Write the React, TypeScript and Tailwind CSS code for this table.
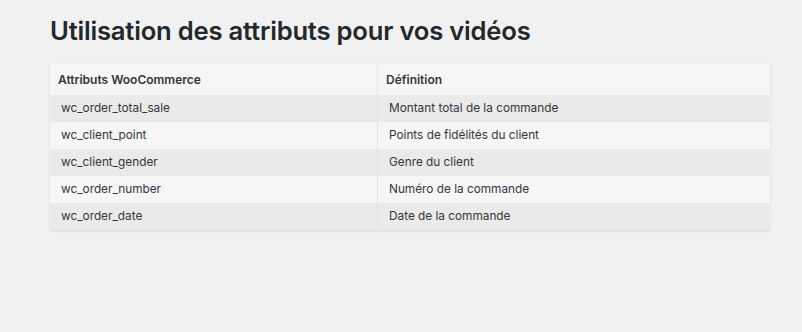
const rows = [
  ["wc_order_total_sale", "Montant total de la commande"],
  ["wc_client_point", "Points de fidélités du client"],
  ["wc_client_gender", "Genre du client"],
  ["wc_order_number", "Numéro de la commande"],
  ["wc_order_date", "Date de la commande"],
];

export default function App() {
  return (
    <div
      className="min-h-[332px] w-full bg-[#f1f1f1] px-[50px] pt-[13px] text-[#32373c]"
      style={{ fontFamily: "Inter, 'Liberation Sans', sans-serif" }}
    >
      <h1 className="text-[25.6px] font-semibold leading-[36px] tracking-[-0.2px] text-[#23282d]">
        Utilisation des attributs pour vos vidéos
      </h1>
      <div className="mt-[15px] w-[720px] bg-[#f6f6f6] shadow-[0_1px_2px_rgba(0,0,0,0.12)]">
        <div className="flex h-[31px] items-center text-[12px] font-semibold text-[#32373c]">
          <div className="w-[328px] border-r border-[#e6e6e6] pl-[8px] h-full flex items-center">Attributs WooCommerce</div>
          <div className="pl-[8px]">Définition</div>
        </div>
        {rows.map(([a, d], i) => (
          <div
            key={a}
            className={`flex h-[27px] items-center text-[11.8px] ${i % 2 === 0 ? "bg-[#eaeaea]" : "bg-[#f6f6f6]"}`}
          >
            <div className="flex h-full w-[328px] items-center border-r border-[#e2e2e2] pl-[11px]">{a}</div>
            <div className="pl-[11px]">{d}</div>
          </div>
        ))}
      </div>
    </div>
  );
}
